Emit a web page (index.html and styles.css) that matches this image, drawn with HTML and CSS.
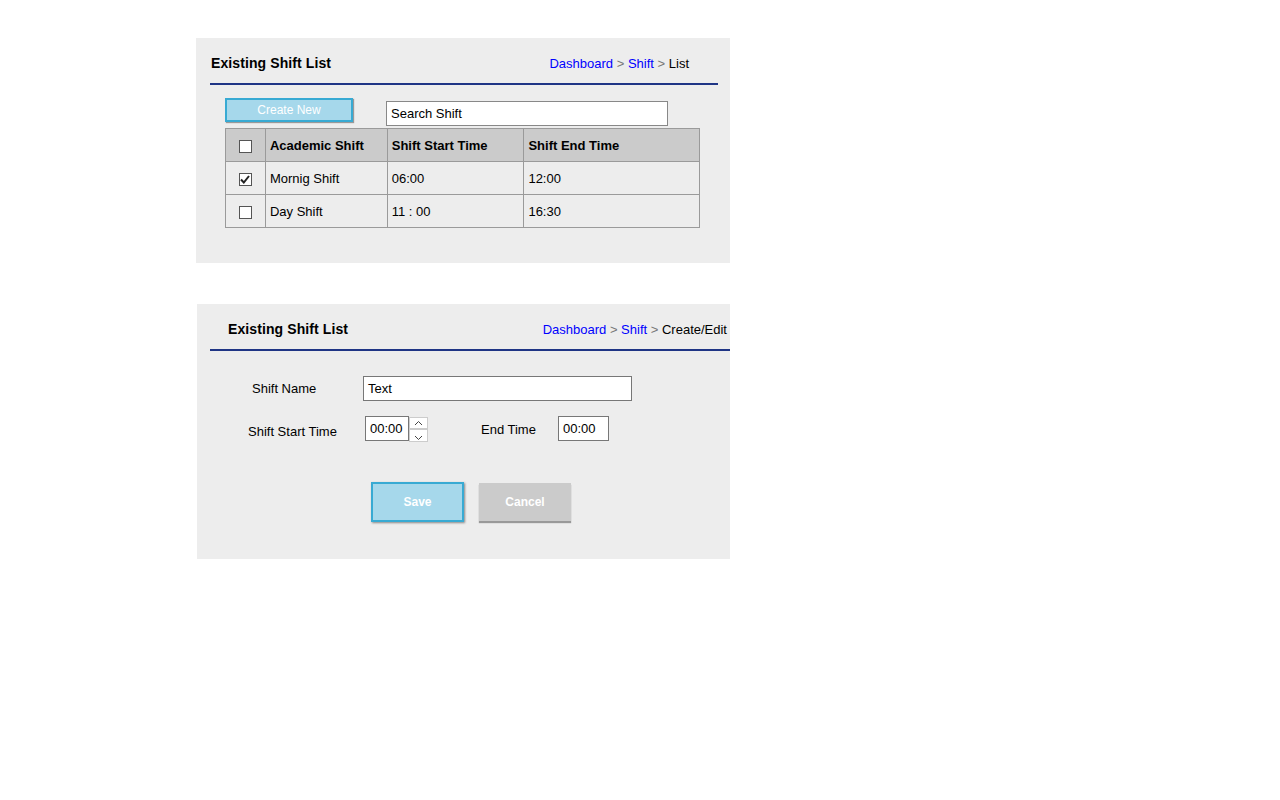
FILE: index.html
```html
<!DOCTYPE html>
<html>
<head>
<meta charset="utf-8">
<link rel="stylesheet" href="styles.css">
</head>
<body>
<section class="panel panel-list">
  <div class="head head-list">
    <h2 class="title">Existing Shift List</h2>
    <div class="crumbs"><a class="link">Dashboard</a> <span class="sep">&gt;</span> <a class="link">Shift</a> <span class="sep">&gt;</span> <span class="cur">List</span></div>
  </div>
  <div class="rule rule-list"></div>
  <div class="toolbar">
    <button class="btn btn-create">Create New</button>
    <div class="search">Search Shift</div>
  </div>
  <table class="grid">
    <colgroup><col class="c1"><col class="c2"><col class="c3"><col class="c4"></colgroup>
    <thead>
      <tr><th class="chk"><span class="box"></span></th><th>Academic Shift</th><th>Shift Start Time</th><th>Shift End Time</th></tr>
    </thead>
    <tbody>
      <tr><td class="chk"><span class="box checked"><svg width="10" height="9" viewBox="0 0 10 9"><path d="M1 4.5 L3.8 7.5 L9 1" fill="none" stroke="#222" stroke-width="2"/></svg></span></td><td>Mornig Shift</td><td>06:00</td><td>12:00</td></tr>
      <tr><td class="chk"><span class="box"></span></td><td>Day Shift</td><td>11 : 00</td><td>16:30</td></tr>
    </tbody>
  </table>
</section>

<section class="panel panel-form">
  <div class="head head-form">
    <h2 class="title">Existing Shift List</h2>
    <div class="crumbs"><a class="link">Dashboard</a> <span class="sep">&gt;</span> <a class="link">Shift</a> <span class="sep">&gt;</span> <span class="cur">Create/Edit</span></div>
  </div>
  <div class="rule rule-form"></div>
  <div class="row row-name">
    <label class="lbl lbl-name">Shift Name</label>
    <div class="field field-name">Text</div>
  </div>
  <div class="row row-time">
    <label class="lbl lbl-start">Shift Start Time</label>
    <div class="timebox">
      <div class="field field-time">00:00</div>
      <div class="spin">
        <span class="spin-up"><svg width="9" height="6" viewBox="0 0 9 6"><path d="M1 5 L4.5 1.5 L8 5" fill="none" stroke="#444" stroke-width="1"/></svg></span>
        <span class="spin-down"><svg width="9" height="6" viewBox="0 0 9 6"><path d="M1 1 L4.5 4.5 L8 1" fill="none" stroke="#444" stroke-width="1"/></svg></span>
      </div>
    </div>
    <label class="lbl lbl-end">End Time</label>
    <div class="field field-end">00:00</div>
  </div>
  <div class="actions">
    <button class="btn btn-save">Save</button>
    <button class="btn btn-cancel">Cancel</button>
  </div>
</section>
</body>
</html>
```

FILE: styles.css
```css
* { box-sizing: border-box; }
html, body { margin: 0; padding: 0; background: #fff; }
body {
  font-family: "Liberation Sans", Arial, sans-serif;
  font-size: 13px;
  color: #000;
  width: 1280px;
  height: 800px;
  padding-top: 38px;
}
.panel { background: #ededed; }
.panel-list { margin-left: 196px; width: 534px; height: 225px; padding-top: 16px; }
.panel-form { margin-left: 197px; margin-top: 41px; width: 533px; height: 255px; padding-top: 16px; }

.head { display: flex; justify-content: space-between; align-items: center; height: 18px; }
.head-list { padding-left: 15px; padding-right: 41px; }
.head-form { padding-left: 31px; padding-right: 3px; }
.title { margin: 0; font-size: 14px; font-weight: bold; letter-spacing: 0.1px; }
.crumbs { font-size: 13px; }
.link { color: #0000ff; }
.sep { color: #777; }
.cur { color: #000; }

.rule { height: 2px; background: #1f3585; margin-top: 11px; }
.rule-list { margin-left: 14px; margin-right: 12px; }
.rule-form { margin-left: 13px; }

.toolbar { display: flex; align-items: flex-start; margin-left: 29px; margin-top: 13px; height: 30px; }
.btn {
  font-family: "Liberation Sans", Arial, sans-serif;
  font-weight: bold;
  color: #fff;
  padding: 0;
  cursor: pointer;
}
.btn-create {
  width: 128px; height: 24px;
  background: #a6d8eb;
  border: 2px solid #38aad3;
  font-size: 12px;
  font-weight: normal;
  box-shadow: 1px 1px 1px #999;
}
.search {
  margin-left: 33px; margin-top: 3px;
  width: 282px; height: 25px;
  background: #fff;
  border: 1px solid #888;
  font-size: 13px;
  line-height: 23px;
  padding-left: 4px;
}

.grid { margin-left: 29px; border-collapse: collapse; width: 475px; }
.grid col.c1 { width: 40px; }
.grid col.c2 { width: 122px; }
.grid col.c3 { width: 137px; }
.grid col.c4 { width: 176px; }
.grid th, .grid td {
  border: 1px solid #9a9a9a;
  height: 33px;
  padding: 0 0 0 4px;
  text-align: left;
  vertical-align: middle;
}
.grid th { background: #cbcbcb; font-size: 13px; font-weight: bold; padding-top: 1px; }
.grid td { background: #ededed; font-size: 13px; padding-top: 1px; }
.grid .chk { padding: 0; text-align: center; }
.box {
  display: inline-flex; align-items: center; justify-content: center;
  width: 13px; height: 13px;
  background: #fff; border: 1px solid #555;
  vertical-align: middle;
}

.row { display: flex; align-items: center; }
.row-name { margin-top: 25px; height: 25px; }
.lbl { font-size: 13px; }
.lbl-name { margin-left: 55px; width: 111px; }
.field {
  background: #fff; border: 1px solid #777;
  height: 25px; line-height: 23px; font-size: 13px; padding-left: 4px;
}
.field-name { width: 269px; }

.row-time { margin-top: 15px; height: 26px; align-items: flex-start; }
.lbl-start { margin-left: 51px; margin-top: 8px; width: 117px; }
.timebox { display: flex; height: 26px; overflow: hidden; }
.field-time { width: 44px; height: 25px; margin-top: 0; }
.spin { display: flex; flex-direction: column; width: 19px; margin-top: 1px; }
.spin-up, .spin-down {
  display: flex; align-items: center; justify-content: center;
  width: 19px; height: 17px; background: #fff; border: 1px solid #ccc;
}
.spin-down { height: 17px; align-items: flex-start; padding-top: 5px; }
.lbl-end { margin-left: 53px; margin-top: 6px; width: 77px; }
.field-end { width: 51px; }

.actions { display: flex; margin-top: 40px; margin-left: 174px; }
.btn-save {
  width: 93px; height: 40px;
  background: #a6d8eb; border: 2px solid #38aad3;
  font-size: 12px;
  box-shadow: 1px 1px 2px #888;
}
.btn-cancel {
  margin-left: 15px; margin-top: 1px;
  width: 92px; height: 38px;
  background: #cbcbcb; border: none;
  font-size: 12px;
  box-shadow: 0 2px 1px #999;
}
```
